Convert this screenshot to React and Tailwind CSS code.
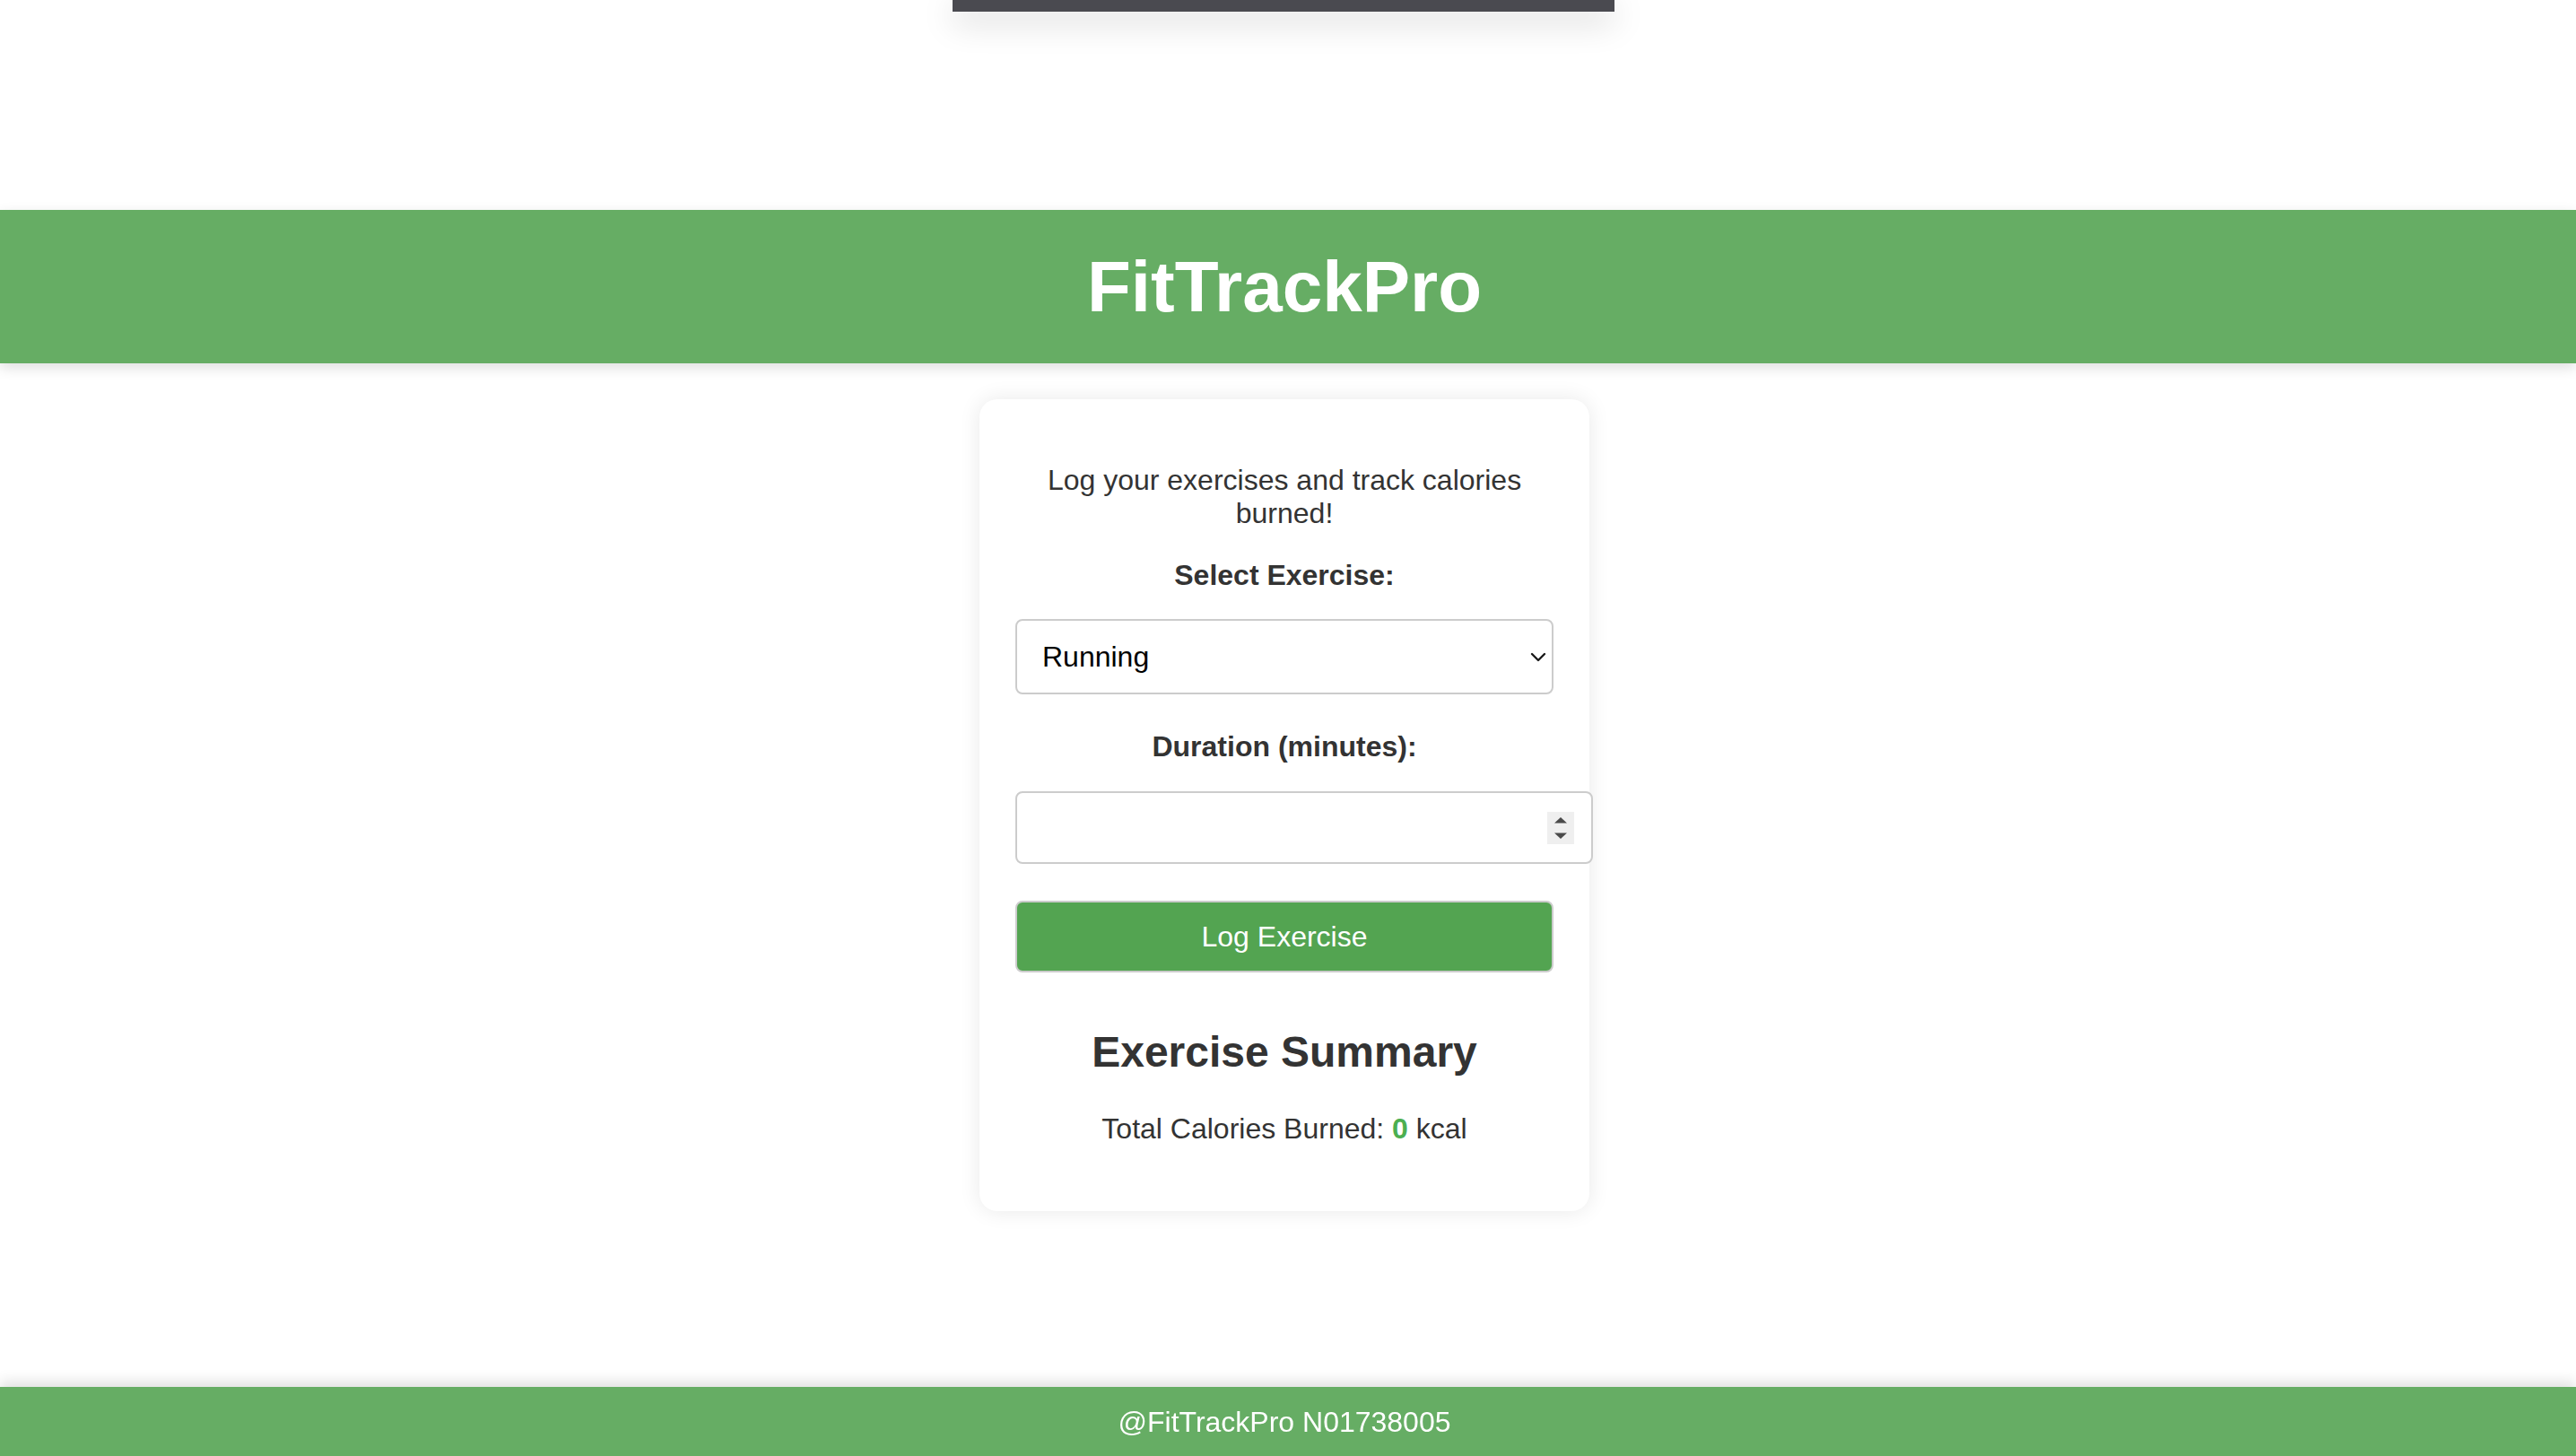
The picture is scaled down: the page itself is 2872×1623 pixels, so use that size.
import React from "react";

export default function App() {
  return (
    <div className="min-h-screen bg-white font-['Liberation_Sans',Arial,Helvetica,sans-serif] text-[#333]">
      <div className="ml-[1062px] w-[738px] h-[13px] bg-[#4a4a50] shadow-[0_10px_36px_rgba(0,0,0,0.22)]" />

      <header className="mt-[221px] h-[171px] pr-[8px] bg-[#66ad64] flex items-center justify-center shadow-[0_5px_14px_rgba(0,0,0,0.13)] relative z-10">
        <h1 className="text-[80px] leading-[92px] font-bold text-white">FitTrackPro</h1>
      </header>

      <main className="flex justify-center pt-[40px] pb-[120px] pr-[8px]">
        <div className="w-[680px] bg-white rounded-[20px] p-[40px] shadow-[0_0_24px_rgba(0,0,0,0.09)] text-center text-[32px] leading-[36.8px]">
          <p className="my-[32px] px-[10px]">Log your exercises and track calories burned!</p>

          <label className="block font-bold mb-[31px]">Select Exercise:</label>
          <div className="relative w-[600px] h-[84px] mb-[40px]">
            <select
              defaultValue="Running"
              className="appearance-none w-full h-full border-2 border-[#cccccc] rounded-[8px] bg-white text-black text-[32px] pl-[28px] pr-[50px] outline-none"
            >
              <option>Running</option>
              <option>Cycling</option>
              <option>Swimming</option>
              <option>Walking</option>
            </select>
            <svg
              className="absolute right-[8px] top-[37px] pointer-events-none"
              width="18"
              height="11"
              viewBox="0 0 18 11"
              fill="none"
            >
              <path d="M2 2 L9 9 L16 2" stroke="#1a1a1a" strokeWidth="2.4" strokeLinecap="round" strokeLinejoin="round" />
            </svg>
          </div>

          <label className="block font-bold mb-[31px]">Duration (minutes):</label>
          <div className="flex items-center w-[644px] h-[81px] border-2 border-[#cccccc] rounded-[8px] bg-white mb-[41px]">
            <input type="text" aria-label="Duration" className="flex-1 h-full bg-transparent outline-none px-[20px] text-[32px]" />
            <div className="w-[30px] h-[36px] bg-[#efefef] mr-[19px] flex items-center justify-center">
              <svg width="30" height="36" viewBox="0 0 30 36">
                <polygon points="8,12.5 22,12.5 15,6" fill="#4a4a4a" />
                <polygon points="8,23.5 22,23.5 15,30" fill="#4a4a4a" />
              </svg>
            </div>
          </div>

          <button className="w-[600px] h-[80px] bg-[#53a451] border-2 border-[#cccccc] rounded-[8px] text-white text-[32px] mb-[20px]">
            Log Exercise
          </button>

          <h2 className="text-[48px] leading-[55px] font-bold mt-[41px] mb-[40px]">Exercise Summary</h2>
          <p className="mb-[33px]">
            Total Calories Burned: <span className="font-bold text-[#4caf50]">0</span> kcal
          </p>
        </div>
      </main>

      <footer className="fixed bottom-0 left-0 w-full h-[77px] pr-[8px] bg-[#66ad64] text-white text-[32px] flex items-center justify-center shadow-[0_-6px_14px_rgba(0,0,0,0.12)]">
        @FitTrackPro N01738005
      </footer>
    </div>
  );
}
